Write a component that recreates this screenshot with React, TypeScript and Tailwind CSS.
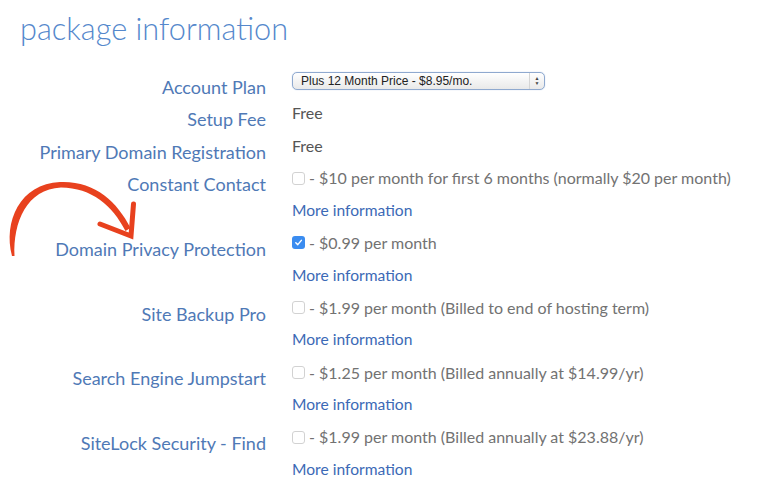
import React from "react";

const labelCls =
  "h-[32.4px] w-[266px] shrink-0 text-right text-[18px] leading-[24px] pt-[10px] text-[#4f79b6] font-['Lato',sans-serif] whitespace-nowrap";

function Box({ checked }: { checked?: boolean }) {
  if (checked) {
    return (
      <span className="mr-[4px] inline-flex h-[13px] w-[13px] items-center justify-center rounded-[3px] bg-[#3a8cf0]">
        <svg width="9" height="9" viewBox="0 0 10 10">
          <path d="M2 5.2 L4.2 7.4 L8.2 2.6" fill="none" stroke="#fff" strokeWidth="1.6" strokeLinecap="round" strokeLinejoin="round" />
        </svg>
      </span>
    );
  }
  return <span className="mr-[4px] inline-block h-[13px] w-[13px] rounded-[3px] border border-[#d2d2d2] bg-white" />;
}

function Line({ children }: { children: React.ReactNode }) {
  return <div className="flex h-[32.4px] items-center whitespace-nowrap">{children}</div>;
}

function More() {
  return (
    <Line>
      <span className="text-[15.6px] text-[#3c69b6]">More information</span>
    </Line>
  );
}

function Row({ label, children }: { label: string; children: React.ReactNode }) {
  return (
    <div className="flex">
      <div className={labelCls}>{label}</div>
      <div className="ml-[26px] flex flex-col text-[16px] text-[#727272] font-['Lato',sans-serif]">{children}</div>
    </div>
  );
}

function Addon({ checked, text }: { checked?: boolean; text: string }) {
  return (
    <>
      <Line>
        <Box checked={checked} />
        <span>- {text}</span>
      </Line>
      <More />
    </>
  );
}

export default function App() {
  return (
    <div className="relative h-[493px] w-[760px] overflow-hidden bg-white font-['Lato',sans-serif]">
      <div className="h-[64.8px] pl-[20px] pt-[14px] text-[30.7px] font-light leading-[30px] text-[#5588cc] whitespace-nowrap">
        package information
      </div>
      <Row label="Account Plan">
        <Line>
          <div className="flex h-[18px] w-[253px] items-center rounded-[5px] border border-[#8fa9cf] bg-gradient-to-b from-white to-[#e9e9e9] font-['Liberation_Sans',sans-serif] text-[12px] text-[#222] shadow-[0_0_1px_#9fb9df]">
            <span className="flex-1 pl-[8px]">Plus 12 Month Price - $8.95/mo.</span>
            <span className="flex h-full w-[15px] flex-col items-center justify-center border-l border-[#d5d5d5] text-[5px] leading-[5px] text-[#444]">
              <span>▲</span>
              <span>▼</span>
            </span>
          </div>
        </Line>
      </Row>
      <Row label="Setup Fee">
        <Line>
          <span className="text-[#555]">Free</span>
        </Line>
      </Row>
      <Row label="Primary Domain Registration">
        <Line>
          <span className="text-[#555]">Free</span>
        </Line>
      </Row>
      <Row label="Constant Contact">
        <Addon text="$10 per month for first 6 months (normally $20 per month)" />
      </Row>
      <Row label="Domain Privacy Protection">
        <Addon checked text="$0.99 per month" />
      </Row>
      <Row label="Site Backup Pro">
        <Addon text="$1.99 per month (Billed to end of hosting term)" />
      </Row>
      <Row label="Search Engine Jumpstart">
        <Addon text="$1.25 per month (Billed annually at $14.99/yr)" />
      </Row>
      <Row label="SiteLock Security - Find">
        <Addon text="$1.99 per month (Billed annually at $23.88/yr)" />
      </Row>
      <svg className="absolute left-0 top-0" width="160" height="270" viewBox="0 0 160 270">
        <path
          d="M12 256 C 3 222, 20 183.5, 60 182 C 94 180.5, 117 201, 130.5 228 L125.5 231 C 112 205, 92 188, 61 187.5 C 27 189, 13 222, 14.5 256 Z"
          fill="#e8411e"
        />
        <path d="M100 224 L131 236 L133.5 204" fill="none" stroke="#e8411e" strokeWidth="5" strokeLinecap="round" strokeLinejoin="miter" />
      </svg>
    </div>
  );
}
